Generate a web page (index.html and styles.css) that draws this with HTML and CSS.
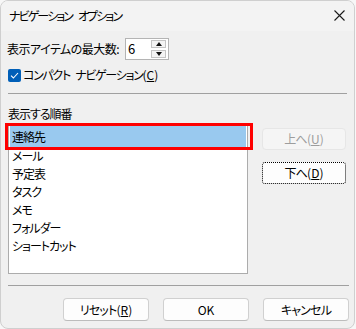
FILE: index.html
```html
<!DOCTYPE html>
<html lang="ja">
  <head>
    <meta charset="UTF-8" />
    <title>ナビゲーション オプション</title>
    <link rel="stylesheet" href="styles.css">
  </head>
  <body>
    <div class="window">
      <div class="titlebar">
        <span class="title">ナビゲーション オプション</span>
        <svg class="close" width="11" height="11" viewBox="0 0 11 11">
          <path d="M0.5 0.5 L10.5 10.5 M10.5 0.5 L0.5 10.5" stroke="#1a1a1a" stroke-width="1.1" fill="none" />
        </svg>
      </div>

      <div class="content">
        <div class="row-max">
          <span class="max-label">表示アイテムの最大数:</span>
          <div class="spinner">
            <span class="spin-value">6</span>
            <div class="spin-buttons">
              <div class="spin-btn"><span class="tri-up"></span></div>
              <div class="spin-btn"><span class="tri-down"></span></div>
            </div>
          </div>
        </div>

        <label class="row-check">
          <span class="checkbox">
            <svg width="9" height="7" viewBox="0 0 9 7">
              <path d="M1 3.6 L3.4 6 L8 1" stroke="#ffffff" stroke-width="1.1" fill="none" />
            </svg>
          </span>
          <span>コンパクト ナビゲーション<span class="latin">(<u>C</u>)</span></span>
        </label>

        <div class="separator sep-top"></div>

        <div class="order-label">表示する順番</div>

        <div class="order-area">
          <div class="listbox">
            <div class="item selected">連絡先</div>
            <div class="item">メール</div>
            <div class="item">予定表</div>
            <div class="item">タスク</div>
            <div class="item">メモ</div>
            <div class="item">フォルダー</div>
            <div class="item">ショートカット</div>
            <div class="highlight"></div>
          </div>
          <div class="move-buttons">
            <button class="btn btn-disabled" disabled>上へ<span class="latin">(<u>U</u>)</span></button>
            <button class="btn btn-focus">下へ<span class="latin">(<u>D</u>)</span></button>
          </div>
        </div>

        <div class="separator sep-bottom"></div>

        <div class="footer">
          <button class="btn btn-footer">リセット<span class="latin">(<u>R</u>)</span></button>
          <button class="btn btn-footer"><span class="latin">OK</span></button>
          <button class="btn btn-footer">キャンセル</button>
        </div>
      </div>
    </div>
  </body>
</html>
```

FILE: styles.css
```css
* {
  margin: 0;
  padding: 0;
  box-sizing: border-box;
}

body {
  background-color: #f7f7f7;
  font-family: "Noto Sans CJK JP", "Noto Sans", sans-serif;
  font-size: 12px;
  font-feature-settings: "palt";
  letter-spacing: -1px;
  color: #000000;
}

.latin {
  letter-spacing: 0;
}

.window {
  width: 355px;
  height: 329px;
  background-color: #f0f0f0;
  border: 1px solid #cfcfcf;
  border-radius: 8px;
  overflow: hidden;
}

.titlebar {
  height: 30px;
  background-color: #f3f3f3;
  display: flex;
  align-items: center;
  justify-content: space-between;
  padding: 0 9px 0 8px;
}

.title {
  font-size: 12px;
  line-height: 16px;
  letter-spacing: -1.9px;
  word-spacing: 5px;
  white-space: nowrap;
}

.close {
  display: block;
  margin-top: -1px;
}

.content {
  padding: 0 8px 0 6px;
}

.row-max {
  display: flex;
  align-items: center;
  margin-top: 7px;
  height: 22px;
}

.max-label {
  width: 118px;
  white-space: nowrap;
  line-height: 16px;
  letter-spacing: -0.5px;
}

.spinner {
  width: 44px;
  height: 22px;
  background: #ffffff;
  border: 1px solid #b4b4b4;
  display: flex;
  align-items: center;
  justify-content: space-between;
  padding: 0 2px 0 2px;
}

.spin-value {
  font-size: 13px;
  line-height: 16px;
  letter-spacing: 0;
}

.spin-buttons {
  display: flex;
  flex-direction: column;
  gap: 2px;
}

.spin-btn {
  width: 15px;
  height: 8px;
  border: 1px solid #c4c4c4;
  background: #f4f4f4;
  display: flex;
  align-items: center;
  justify-content: center;
}

.tri-up {
  width: 0;
  height: 0;
  border-left: 3px solid transparent;
  border-right: 3px solid transparent;
  border-bottom: 4px solid #111111;
}

.tri-down {
  width: 0;
  height: 0;
  border-left: 3px solid transparent;
  border-right: 3px solid transparent;
  border-top: 4px solid #111111;
}

.row-check {
  display: flex;
  align-items: center;
  gap: 2px;
  margin-top: 8px;
  height: 14px;
  line-height: 16px;
  letter-spacing: -1.3px;
  word-spacing: 4px;
  white-space: nowrap;
}

.checkbox {
  width: 13px;
  height: 13px;
  background: #005fb8;
  border-radius: 2px;
  display: flex;
  align-items: center;
  justify-content: center;
  margin-left: 1px;
}

.checkbox svg {
  display: block;
}

.separator {
  height: 1px;
  background-color: #a0a0a0;
  margin-left: 1px;
}

.sep-top {
  margin-top: 11px;
  width: 339px;
}

.order-label {
  margin-top: 12px;
  line-height: 16px;
  margin-left: 1px;
}

.order-area {
  display: flex;
  margin-top: 2px;
}

.listbox {
  position: relative;
  width: 242px;
  height: 150px;
  margin-left: 1px;
  background: #ffffff;
  border: 1px solid #acacac;
  padding-top: 1px;
}

.item {
  height: 18px;
  line-height: 18px;
  padding-left: 3px;
  white-space: nowrap;
}

.item.selected {
  height: 21px;
  line-height: 22px;
  margin: 0 1px;
  padding-left: 2px;
  background-color: #99c9ef;
}

.highlight {
  position: absolute;
  left: -4px;
  top: -2px;
  width: 248px;
  height: 27px;
  border: 3px solid #ff0000;
}

.move-buttons {
  display: flex;
  flex-direction: column;
  gap: 12px;
  margin-left: 14px;
  margin-top: 4px;
}

.btn {
  font-family: "Noto Sans CJK JP", "Noto Sans", sans-serif;
  font-size: 12px;
  font-feature-settings: "palt";
  letter-spacing: -0.8px;
  color: #000000;
  background: #fdfdfd;
  border: 1px solid #d0d0d0;
  border-bottom-color: #bcbcbc;
  border-radius: 4px;
  line-height: 16px;
  white-space: nowrap;
}

.move-buttons .btn {
  width: 84px;
  height: 22px;
}

.btn-disabled {
  background: #f5f5f5;
  border-color: #e6e6e6;
  color: #9d9d9d;
}

.btn-focus {
  border: 1px dotted #000000;
  border-radius: 3px;
}

.sep-bottom {
  margin-top: 11px;
  width: 341px;
}

.footer {
  display: flex;
  justify-content: flex-end;
  gap: 14px;
  margin-top: 12px;
  width: 342px;
}

.btn-footer {
  width: 86px;
  height: 23px;
}
```
